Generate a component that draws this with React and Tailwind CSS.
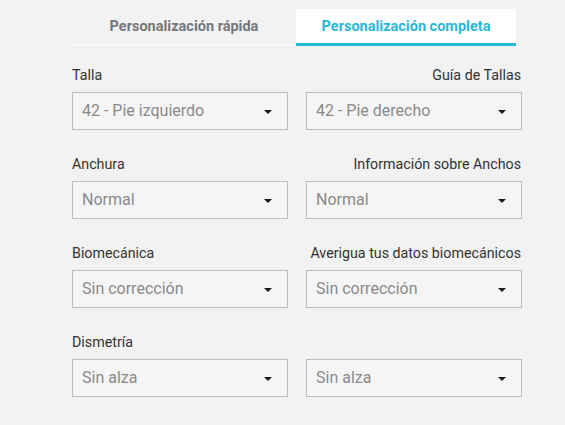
import { useState } from 'react'

const rows = [
  { label: 'Talla', link: 'Guía de Tallas', left: '42 - Pie izquierdo', right: '42 - Pie derecho' },
  { label: 'Anchura', link: 'Información sobre Anchos', left: 'Normal', right: 'Normal' },
  { label: 'Biomecánica', link: 'Averigua tus datos biomecánicos', left: 'Sin corrección', right: 'Sin corrección' },
  { label: 'Dismetría', link: '', left: 'Sin alza', right: 'Sin alza' },
]

function Select({ value }) {
  return (
    <div className="flex items-center justify-between h-[38px] w-[216px] border border-[#bdbdbd] bg-[#f5f5f5] pl-[9px] pr-[15px]">
      <span className="text-[16px] text-[#8a8a8a]">{value}</span>
      <svg width="8" height="4" viewBox="0 0 8 4" className="mt-[1px]">
        <path d="M0 0h8L4 4z" fill="#1a1a1a" />
      </svg>
    </div>
  )
}

export default function App() {
  const [tab, setTab] = useState(1)
  return (
    <div className="min-h-[425px] w-[565px] bg-[#f2f2f2] pt-[9px]" style={{ fontFamily: 'Roboto, "Liberation Sans", sans-serif' }}>
      <div className="ml-[72px] w-[450px]">
        {/* Tabs */}
        <div className="flex border-b-[2px] border-[#f7f7f7] h-[37px]">
          <button onClick={() => setTab(0)}
            className={`w-[224px] text-[14.5px] font-bold ${tab === 0 ? 'bg-white text-[#29b8d8] border-b-[3px] border-[#29b8d8] -mb-[2px]' : 'text-[#777]'}`}>
            Personalización rápida
          </button>
          <button onClick={() => setTab(1)}
            className={`w-[220px] text-[14.5px] font-bold pt-[1px] ${tab === 1 ? 'bg-white text-[#29b8d8] border-b-[3px] border-[#29b8d8] -mb-[2px]' : 'text-[#777]'}`}>
            Personalización completa
          </button>
        </div>

        {/* Fields */}
        <div className="mt-[21px] flex flex-col gap-[26px]">
          {rows.map(r => (
            <div key={r.label}>
              <div className="flex justify-between text-[14.25px] text-[#333] leading-[16px] mb-[9px]">
                <span>{r.label}</span>
                <span className="pr-[1px]">{r.link}</span>
              </div>
              <div className="flex gap-[18px]">
                <Select value={r.left} />
                <Select value={r.right} />
              </div>
            </div>
          ))}
        </div>
      </div>
    </div>
  )
}
